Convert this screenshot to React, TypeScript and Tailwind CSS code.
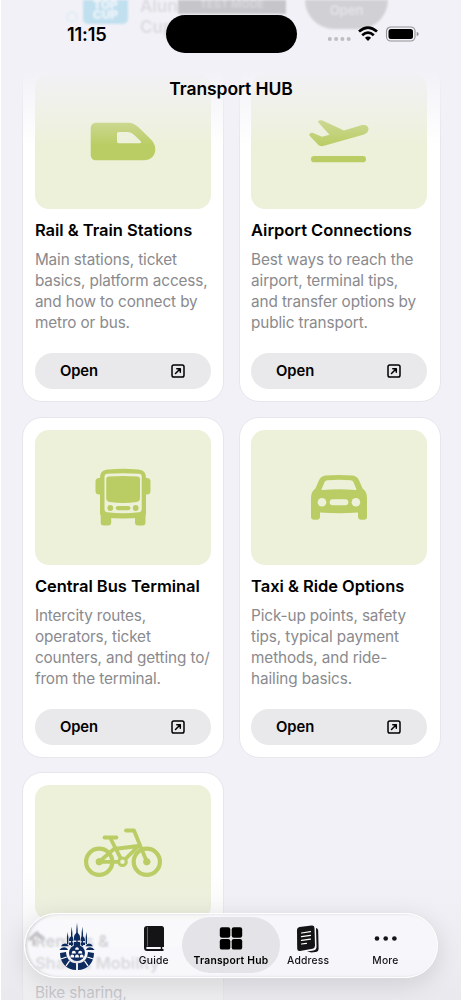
import React from "react";

type Card = {
  title: string[];
  lines: string[];
  icon: React.ReactNode;
};

const TrainIcon = () => (
  <svg width="176" height="135" viewBox="0 0 176 135" fill="#bacd65">
    <path
      fillRule="evenodd"
      d="M61.5 48.7H93C97.500 48.700 100.500 50.500 103.500 53.300L116 65.500C119 68.500 120.300 71.500 120.300 75.500C120.300 81.800 115.500 86.300 109 86.300H61.500C57.800 86.300 55.700 84.200 55.700 80.500V54.500C55.700 50.800 57.800 48.700 61.500 48.700ZM83.500 58Q82 58 82 59.500V67.500Q82 69.200 83.700 69.200H104.500Q107 69.200 105.500 67L99.500 61.200C97 58.800 95 58 92 58Z"
    />
  </svg>
);

const PlaneIcon = () => (
  <svg width="176" height="135" viewBox="0 0 176 135" fill="#bacd65">
    <path d="M67.200 48.300C66.300 46.700 69.500 45.700 71.500 46.600L93 56.500L109.500 51.400C113 50.200 117.500 51.200 117.500 54.800C117.500 57.900 115.500 59.500 113 60.400L73 71.800C70.500 72.500 68.700 72.200 67.200 70.700L58.600 61.800C57.200 60.300 60.300 58.200 62.200 59L71 62.800L78.500 60.700Z" />
    <rect x="60" y="82" width="55" height="6.300" rx="3.150" />
  </svg>
);

const BusIcon = () => (
  <svg width="176" height="135" viewBox="0 0 176 135" fill="#bacd65">
    <rect x="60.500" y="48" width="55" height="16.500" rx="3.500" />
    <rect x="65.700" y="78" width="10.500" height="17.500" rx="3" />
    <rect x="100" y="78" width="10.500" height="17.500" rx="3" />
    <path d="M65 48C65 42 68 40 73 39.500Q88 38 103 39.500C108 40 111 42 111 48V83Q111 86 108 87Q88 90 68 87Q65 86 65 83Z" />
    <path
      fill="#edf1da"
      d="M69.500 46.500Q69.500 44 72 43.800Q88 42.600 104 43.800Q106.700 44 106.700 46.500V79Q106.700 82 103.800 82.300Q88 84.300 72.300 82.300Q69.500 82 69.500 79Z"
    />
    <path d="M71.200 49.500Q71.200 46.700 74 46.500Q88 45.500 102 46.500Q105 46.700 105 49.500V68Q105 71.500 101.500 72Q88 74 74.700 72Q71.200 71.500 71.200 68Z" />
    <circle cx="75.300" cy="78" r="2.900" />
    <circle cx="100.700" cy="78" r="2.900" />
    <rect x="80.700" y="75.900" width="14.800" height="4.300" rx="2.150" />
  </svg>
);

const CarIcon = () => (
  <svg width="176" height="135" viewBox="0 0 176 135" fill="#bacd65">
    <path
      fillRule="evenodd"
      d="M74.500 45.600Q88 44.200 101.500 45.600Q106 46.200 108 50.200L111.500 58.300C114.500 60.700 116 63.500 116 68V86.500Q116 89.700 113 89.700H110.200Q107 89.700 107 86.500V82.600Q88 84 69 82.600V86.500Q69 89.700 65.800 89.700H63.200Q60 89.700 60 86.500V68C60 63.500 61.500 60.700 64.500 58.300L68 50.200Q70 46.200 74.500 45.600ZM76.500 50.200Q74.300 50.400 73.500 52.200L70.700 59Q70.400 60 71.500 59.900Q88 58.800 104.500 59.900Q105.600 60 105.300 59L102.500 52.200Q101.700 50.400 99.500 50.200Q88 49.200 76.500 50.200Z"
    />
    <circle cx="71" cy="72.200" r="4.300" fill="#edf1da" />
    <circle cx="104.900" cy="72.200" r="4.300" fill="#edf1da" />
    <rect x="78.700" y="69.300" width="18.600" height="6" rx="3" fill="#edf1da" />
  </svg>
);

const BikeIcon = () => (
  <svg width="176" height="135" viewBox="0 0 176 135" fill="none" stroke="#bacd65" strokeWidth="3.800" strokeLinecap="round" strokeLinejoin="round">
    <circle cx="64.200" cy="76.800" r="13.100" strokeWidth="4.200" />
    <circle cx="111.800" cy="76.800" r="13.100" strokeWidth="4.200" />
    <path d="M64.200 76.800H87.500L103.500 61L79 64Z" />
    <path d="M75 52.500L87.500 76.800M69.500 52.500H81.500M91 45.500H99L111.800 76.800" />
    <circle cx="64.200" cy="76.800" r="3.200" fill="#bacd65" strokeWidth="1" />
    <circle cx="111.800" cy="76.800" r="3.200" fill="#bacd65" strokeWidth="1" />
    <circle cx="87.500" cy="76.800" r="3.800" fill="#edf1da" strokeWidth="3" />
  </svg>
);

const cards: Card[] = [
  {
    title: ["Rail & Train Stations"],
    lines: ["Main stations, ticket", "basics, platform access,", "and how to connect by", "metro or bus."],
    icon: <TrainIcon />,
  },
  {
    title: ["Airport Connections"],
    lines: ["Best ways to reach the", "airport, terminal tips,", "and transfer options by", "public transport."],
    icon: <PlaneIcon />,
  },
  {
    title: ["Central Bus Terminal"],
    lines: ["Intercity routes,", "operators, ticket", "counters, and getting to/", "from the terminal."],
    icon: <BusIcon />,
  },
  {
    title: ["Taxi & Ride Options"],
    lines: ["Pick-up points, safety", "tips, typical payment", "methods, and ride-", "hailing basics."],
    icon: <CarIcon />,
  },
  {
    title: ["Rentals &", "Shared Mobility"],
    lines: ["Bike sharing,"],
    icon: <BikeIcon />,
  },
];

function TransportCard({ title, lines, icon }: Card) {
  return (
    <article className="flex h-[341px] flex-col rounded-[20px] border border-[#e6e6eb] bg-white px-[11.500px] pt-3">
      <div className="h-[135px] w-[176px] shrink-0 overflow-hidden rounded-[14px] bg-[#edf1da]">{icon}</div>
      <h2 className="mt-[10px] whitespace-nowrap text-[16.500px] font-semibold leading-[22px] tracking-[-0.030px] text-black">
        {title.map((t) => (
          <span key={t} className="block">{t}</span>
        ))}
      </h2>
      <p className="mt-2 h-[84px] shrink-0 whitespace-nowrap text-[15.300px] leading-[21px] tracking-[-0.110px] text-[#8a8a8e]">
        {lines.map((l) => (
          <span key={l} className="block">{l}</span>
        ))}
      </p>
      <button className="mt-5 flex h-9 w-[176px] shrink-0 items-center justify-between rounded-full bg-[#e9e9eb] pl-[25px] pr-[26px] text-[14.800px] font-semibold tracking-[-0.100px] text-black">
        Open
        <svg width="14" height="14" viewBox="0 0 14 14" fill="none" stroke="black" strokeWidth="1.500" strokeLinecap="round" strokeLinejoin="round">
          <rect x="1" y="1" width="12" height="12" rx="1.800" />
          <path d="M4.500 9.500L9 5M5.800 4.700H9.300V8.200" />
        </svg>
      </button>
    </article>
  );
}

// Leftovers of the page above, fading out under the status bar
function FadedPromo() {
  return (
    <div className="absolute inset-x-0 top-0 flex h-10 items-start overflow-hidden pl-[66px] opacity-80 blur-[1.200px]" aria-hidden>
      <div className="mt-[11px] size-3 rounded-full border-2 border-[#d9edf5]" />
      <div className="ml-[5px] h-6 w-[45px] rounded-b-[5px] bg-[#b5dcee] text-center text-[12px] font-black leading-[10px] text-[#edf5fa]">
        TOP
        <br />
        CUP
      </div>
      <div className="-mt-[4px] ml-[12px] w-[38px] text-[17px] font-semibold leading-[21px] text-[#d5d5d9]">
        Alun
        <br />
        Cup
      </div>
      <div className="h-[14px] w-[108px] bg-[#bcbcc0] text-center text-[11px] font-bold leading-[8px] text-[#d2d2d5]">TEST MODE</div>
      <div className="ml-[19px] h-[29px] w-[83px] rounded-b-full bg-[#c9c9cc] text-center text-[13px] font-semibold leading-[20px] text-[#e3e3e6]">Open</div>
    </div>
  );
}

const CityLogo = () => (
  <svg width="36" height="50" viewBox="0 0 36 50" fill="#0d2b5e">
    <path d="M18 .5L18.700 8V24H17.300V8ZM12.700 4.500L13.400 11V24H12V11ZM23.300 4.500L24 11V24H22.600V11ZM8.600 10L9.300 15V22H8V15ZM27.400 10L28 15V22H26.700V15Z" />
    <path d="M15 15Q15.300 12.500 18 10Q20.700 12.500 21 15V18.500H15ZM15 20H21V24H15ZM10 18Q10.300 15.500 12.600 13.500Q14.300 15 14.300 17V19H10ZM10 20.500H14.300V23H10ZM21.700 17Q21.700 15 23.400 13.500Q25.700 15.500 26 18V19H21.700ZM21.700 20.500H26V23H21.700Z" />
    <path d="M2 24.200Q3 21.500 6 21.500T9.500 24.200ZM26.500 24.200Q27.500 21.500 30 21.500T34 24.200ZM.3 28Q2 25.200 5 25.200T9 28ZM27 28Q28 25.200 31 25.200T35.700 28Z" />
    <path d="M1 31L7 30C7.500 37 11.500 41 17 41.300V48C8 48 1 41 1 31ZM35 31L29 30C28.500 37 24.500 41 19 41.300V48C28 48 35 41 35 31Z" />
    <circle cx="18" cy="31" r="8" />
    <g fill="#fff">
      <path d="M16.200 27a1.800 1.800 0 0 1 3.600 0v.8h-3.600zM12.800 30.700a2 2 0 0 1 4 0v.9h-4zM19.200 30.700a2 2 0 0 1 4 0v.9h-4zM11.400 34.500a1.900 1.900 0 0 1 3.800 0v.9h-3.800zM16.100 34.500a1.900 1.900 0 0 1 3.800 0v.9h-3.800zM20.800 34.500a1.900 1.900 0 0 1 3.800 0v.9h-3.800z" />
      <path d="M1.500 36.500l6-2 .4 1-6 2zM34.500 36.500l-6-2-.4 1 6 2zM6.500 43.500l3.500-5 1 .8-3.500 5zM29.500 43.500l-3.500-5-1 .8 3.500 5z" />
    </g>
  </svg>
);

const BookIcon = () => (
  <svg width="22" height="28" viewBox="0 0 22 28">
    <path d="M4 1H18.500Q21 1 21 3.500V22H4Q3.200 22 3.200 23T4 24H20.500V26H4Q1 26 1 22.500V4Q1 1 4 1Z" fill="#141417" />
    <path d="M4.500 2V21.300" stroke="#77777b" strokeWidth=".8" />
    <path d="M18.500 22V26" stroke="#141417" strokeWidth="1.500" />
  </svg>
);

const GridIcon = () => (
  <svg width="24" height="24" viewBox="0 0 24 24">
    <rect x=".8" y=".2" width="10.500" height="10.500" rx="2.200" />
    <rect x="12.700" y=".2" width="10.500" height="10.500" rx="2.200" />
    <rect x=".8" y="12.100" width="10.500" height="10.500" rx="2.200" />
    <rect x="12.700" y="12.100" width="10.500" height="10.500" rx="2.200" />
  </svg>
);

const PagesIcon = () => (
  <svg width="24" height="28" viewBox="0 0 24 28">
    <path d="M20 2.900Q22 3 22.200 5.500L22.600 23.500Q22.600 26.700 19.500 27L15.500 27.400L11 26.500L17.500 25.500Q20.600 24.800 20.500 21.500Z" fill="#141417" />
    <path d="M3.500 2L15.500.6Q18.300.3 18.500 3L19 20.500Q19 23 16.500 23.700L4 26Q1.300 26.300 1.200 23.700L1 5Q1 2.400 3.500 2Z" fill="#141417" />
    <path d="M5.500 8L14.500 6.700M5.500 11.700L14.500 10.400M5.500 15.400L14.500 14.100M5.500 19L10.500 18.300" stroke="white" strokeWidth="1.200" strokeLinecap="round" />
  </svg>
);

const MoreIcon = () => (
  <svg width="24" height="6" viewBox="0 0 24 6" fill="#141417">
    <circle cx="4" cy="2.500" r="2.300" />
    <circle cx="12.700" cy="2.500" r="2.300" />
    <circle cx="21.400" cy="2.500" r="2.300" />
  </svg>
);

const tabs = [
  { label: "Guide", icon: <BookIcon /> },
  { label: "Transport Hub", icon: <GridIcon />, active: true },
  { label: "Address", icon: <PagesIcon /> },
  { label: "More", icon: <MoreIcon /> },
];

function TabBar() {
  return (
    <nav className="absolute left-6 top-[913px] flex h-[65px] w-[414px] overflow-hidden rounded-full border border-white bg-[#fafafd]/75 px-[13px] shadow-[inset_2px_0_3px_#d5d5d9,0_6px_24px_rgba(0,0,0,0.120)] backdrop-blur-[0.800px]">
      <svg className="absolute left-[2px] top-[16px] blur-[0.800px]" width="18" height="18" viewBox="0 0 18 18" fill="none" stroke="#bdbdc1" strokeWidth="3">
        <path d="M2 10L10 3L16 10M7 9V16" />
      </svg>
      <div className="relative flex flex-1 justify-center pt-[8px]">
        <CityLogo />
      </div>
      {tabs.map((tab) => (
        <div key={tab.label} className="relative flex flex-1 flex-col items-center">
          {tab.active && <div className="absolute -inset-x-[10.500px] top-[3px] h-14 rounded-full bg-[#e4e4e8]" />}
          <div className="relative flex h-[38px] items-center pt-[11px]">{tab.icon}</div>
          <span
            className={
              tab.active
                ? "relative mt-[2px] whitespace-nowrap text-[10.300px] font-semibold leading-[13px] tracking-[0.240px] text-black"
                : "relative mt-[2px] whitespace-nowrap text-[10.300px] font-medium leading-[13px] tracking-[0.200px] text-[#141417]"
            }
          >
            {tab.label}
          </span>
        </div>
      ))}
    </nav>
  );
}

function StatusBar() {
  return (
    <div className="relative flex h-[68px] items-start">
      <span className="w-[165.500px] pl-[67px] pt-[23px] text-[18.300px] font-semibold leading-[23px] tracking-[-0.200px] text-black">11:15</span>
      <div className="mt-[15px] h-[38px] w-[131px] rounded-full bg-black" />
      <svg className="ml-[30px] mt-[25px]" width="94" height="18" viewBox="0 0 94 18">
        <g fill="#bdbdc2">
          <circle cx="2.800" cy="14" r="2" />
          <circle cx="9.100" cy="14" r="2" />
          <circle cx="15.400" cy="14" r="2" />
          <circle cx="21.700" cy="14" r="2" />
        </g>
        <g fill="none" stroke="black" strokeWidth="2.700">
          <path d="M32 6.600Q41 -1.400 50 6.600" />
          <path d="M35.200 10.200Q41 5.100 46.800 10.200" />
        </g>
        <path d="M37.900 12.700Q41 10.200 44.100 12.700L41 15.900Z" />
        <rect x="59.500" y="2" width="28.500" height="14" rx="4.300" fill="none" stroke="#929296" strokeWidth="1.100" />
        <rect x="61.500" y="4" width="24.500" height="10" rx="2.500" />
        <path d="M89.700 6.700Q91.800 7.500 91.800 9T89.700 11.300Z" fill="#929296" />
      </svg>
    </div>
  );
}

function Header() {
  return (
    <header className="absolute inset-x-0 top-0 h-[145px] bg-linear-to-b from-[#f2f1f7] from-48% to-[#f2f1f7]/0">
      <FadedPromo />
      <StatusBar />
      <h1 className="pt-[9px] text-center text-[17.500px] font-semibold leading-[23px] tracking-[-0.100px] text-black">Transport HUB</h1>
    </header>
  );
}

export default function App() {
  return (
    <div className="relative h-[1000px] w-[462px] overflow-hidden bg-[#f2f1f7] font-['Inter',sans-serif]">
      <main className="grid grid-cols-[202px_202px] gap-x-[14.200px] gap-y-[14.700px] pl-[22.400px] pt-[61px]">
        {cards.map((card) => (
          <TransportCard key={card.title[0]} {...card} />
        ))}
      </main>
      <Header />
      <div className="absolute inset-x-0 bottom-0 h-[130px] bg-linear-to-b from-[#ececf1]/0 to-[#e6e6ea]/70" />
      <TabBar />
      <div className="pointer-events-none absolute inset-0 border-x border-white" />
    </div>
  );
}
